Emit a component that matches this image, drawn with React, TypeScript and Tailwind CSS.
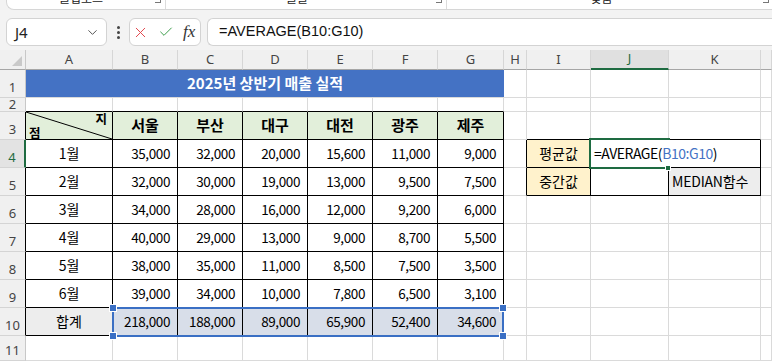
import React from "react";
import { ChevronDown, X, Check } from "lucide-react";

const COLS =
  "grid-cols-[26px_87px_65px_65px_65px_65px_65px_66px_23px_64px_78px_92px_11px]";
const ROWS =
  "grid-rows-[20px_28px_14px_28px_28px_28px_28px_28px_28px_28px_28px_25px]";

const CELL_FONT = { fontFamily: '"Noto Sans CJK KR", "Noto Sans", sans-serif' };
const UI_FONT = { fontFamily: '"Noto Sans", "Liberation Sans", sans-serif' };

const letters = ["A", "B", "C", "D", "E", "F", "G", "H", "I", "J", "K", ""];

const months: [string, number[]][] = [
  ["1월", [35000, 32000, 20000, 15600, 11000, 9000]],
  ["2월", [32000, 30000, 19000, 13000, 9500, 7500]],
  ["3월", [34000, 28000, 16000, 12000, 9200, 6000]],
  ["4월", [40000, 29000, 13000, 9000, 8700, 5500]],
  ["5월", [38000, 35000, 11000, 8500, 7500, 3500]],
  ["6월", [39000, 34000, 10000, 7800, 6500, 3100]],
];
const totals = [218000, 188000, 89000, 65900, 52400, 34600];

const fmt = (n: number) => n.toLocaleString("en-US");

// plain grid cell with gridlines; black edges where the tables are
function Cell({
  r = false,
  b = false,
  className = "",
  children,
}: {
  r?: boolean;
  b?: boolean;
  className?: string;
  children?: React.ReactNode;
}) {
  return (
    <div
      className={`border-r border-b ${r ? "border-r-black" : "border-r-[#dadada]"} ${
        b ? "border-b-black" : "border-b-[#dadada]"
      } ${className}`}
    >
      {children}
    </div>
  );
}

function RowHead({
  n,
  black = false,
  active = false,
  short = false,
}: {
  n: number;
  black?: boolean;
  active?: boolean;
  short?: boolean;
}) {
  return (
    <div
      className={`flex justify-center text-[13px] leading-none border-b border-b-[#d4d4d4] ${
        short ? "items-center" : "items-end pb-[3px]"
      } ${
        active
          ? "bg-[#e3e3e3] text-[#1e6b41] border-r-2 border-r-[#1e6b41]"
          : `bg-[#f0f0f0] text-[#444] border-r ${black ? "border-r-black" : "border-r-[#c8c8c8]"}`
      }`}
      style={UI_FONT}
    >
      {n}
    </div>
  );
}

function Ribbon() {
  return (
    <div className="h-[18px] bg-[#f3f3f3]">
      <div
        className="ml-[6px] h-[10px] bg-white border-b border-l border-[#d6d6d6] rounded-bl-[8px] flex overflow-hidden text-[12px] text-[#222]"
        style={CELL_FONT}
      >
        <div className="w-[159px] relative border-r border-[#dcdcdc] flex justify-center pr-[10px]">
          <span className="-mt-[10px] leading-[16px]">클립보드</span>
          <span className="absolute right-[4px] top-0 w-[6px] h-[3px] border-b border-r border-[#777]" />
        </div>
        <div className="w-[281px] relative border-r border-[#dcdcdc] flex justify-center pr-[18px]">
          <span className="-mt-[10px] leading-[16px]">글꼴</span>
          <span className="absolute right-[4px] top-0 w-[6px] h-[3px] border-b border-r border-[#777]" />
        </div>
        <div className="flex-1 relative flex justify-center pr-[16px]">
          <span className="-mt-[10px] leading-[16px]">맞춤</span>
          <span className="absolute right-[3px] top-0 w-[6px] h-[3px] border-b border-r border-[#777]" />
        </div>
      </div>
    </div>
  );
}

function FormulaBar() {
  return (
    <div className="h-[32px] bg-[#f3f3f3] flex items-start">
      <div className="ml-[6px] w-[101px] h-[28px] bg-white border border-[#d3d3d3] rounded-[6px] flex items-center justify-between pl-[8px] pr-[6px]">
        <span className="text-[15px] text-[#222]" style={UI_FONT}>
          J4
        </span>
        <ChevronDown size={15} strokeWidth={1.6} color="#555" />
      </div>
      <div className="w-[22px] h-[28px] flex flex-col items-center justify-center gap-[2px]">
        <span className="w-[3px] h-[3px] rounded-full bg-[#444]" />
        <span className="w-[3px] h-[3px] rounded-full bg-[#444]" />
        <span className="w-[3px] h-[3px] rounded-full bg-[#444]" />
      </div>
      <div className="w-[72px] h-[28px] bg-white border border-[#d3d3d3] rounded-[6px] flex items-center pl-[2px] gap-[9px]">
        <X size={17} strokeWidth={1.4} color="#e2474d" />
        <Check size={16} strokeWidth={1.5} color="#3d9e4c" />
        <span
          className="italic text-[17px] text-[#333] leading-none -mt-[2px]"
          style={{ fontFamily: '"Liberation Serif", "DejaVu Serif", serif' }}
        >
          fx
        </span>
      </div>
      <div className="ml-[6px] flex-1 h-[28px] bg-white border border-r-0 border-[#d3d3d3] rounded-l-[6px] flex items-center pl-[11px]">
        <span className="text-[14.5px] text-[#111]" style={{ fontFamily: '"Liberation Sans", Arial, sans-serif' }}>
          =AVERAGE(B10:G10)
        </span>
      </div>
    </div>
  );
}

function Sheet() {
  const num = "flex items-center justify-end pr-[7px] text-[13.5px] tracking-[-0.4px] text-black";
  const ctr = "flex items-center justify-center text-[14px] text-black";

  return (
    <div className="relative">
      <div className={`grid ${COLS} ${ROWS}`} style={CELL_FONT}>
        {/* column header */}
        <div className="bg-[#f0f0f0] border-r border-b border-r-[#c8c8c8] border-b-[#a6a6a6] flex items-end justify-end pr-[3px] pb-[3px]">
          <svg width="10" height="10" viewBox="0 0 10 10">
            <polygon points="10,0 10,10 0,10" fill="#c9c9c9" />
          </svg>
        </div>
        {letters.map((l, i) => (
          <div
            key={i}
            className={`flex items-center justify-center text-[13px] border-r border-r-[#d6d6d6] ${
              l === "J"
                ? "bg-[#e0e0e0] text-[#1e6b41] border-b-2 border-b-[#1e6b41]"
                : "bg-[#f0f0f0] text-[#444] border-b border-b-[#a6a6a6]"
            }`}
            style={UI_FONT}
          >
            {l}
          </div>
        ))}

        {/* row 1: title */}
        <RowHead n={1} />
        <div className="col-span-7 bg-[#4472c4] border-b border-b-[#dadada] flex items-center justify-center text-white text-[15px] font-bold">
          2025년 상반기 매출 실적
        </div>
        {[0, 1, 2, 3, 4].map((i) => (
          <Cell key={i} />
        ))}

        {/* row 2 */}
        <RowHead n={2} short />
        {[0, 1, 2, 3, 4, 5, 6].map((i) => (
          <Cell key={i} b />
        ))}
        {[0, 1, 2, 3, 4].map((i) => (
          <Cell key={i} />
        ))}

        {/* row 3: headers */}
        <RowHead n={3} black />
        <Cell r b className="relative bg-[#e2efda] flex flex-col justify-between px-[3px] pb-0 text-[12.5px] font-bold leading-none">
          <svg className="absolute inset-0 w-full h-full" preserveAspectRatio="none" viewBox="0 0 86 27">
            <line x1="0" y1="0" x2="86" y2="27" stroke="black" strokeWidth="1" />
          </svg>
          <span className="self-end mr-[2px] mt-[1px]">지</span>
          <span className="self-start">점</span>
        </Cell>
        {["서울", "부산", "대구", "대전", "광주", "제주"].map((c) => (
          <Cell key={c} r b className={`${ctr} bg-[#e2efda] font-bold text-[15px]`}>
            {c}
          </Cell>
        ))}
        <Cell />
        <Cell b />
        <Cell b />
        <Cell b />
        <Cell />

        {/* rows 4-9 */}
        {months.map(([m, vals], ri) => (
          <React.Fragment key={m}>
            <RowHead n={ri + 4} black active={ri === 0} />
            <Cell r b className={ctr}>
              {m}
            </Cell>
            {vals.map((v, i) => (
              <Cell key={i} r b className={num}>
                {fmt(v)}
              </Cell>
            ))}
            {ri === 0 && (
              <>
                <Cell r />
                <Cell r b className={`${ctr} bg-[#fff2cc]`}>
                  평균값
                </Cell>
                {/* J4 in edit mode: text runs over K4, no divider */}
                <Cell b className="relative flex items-center pl-[3px] text-[14px] tracking-[-0.45px] whitespace-nowrap !border-r-white">
                  <span>
                    =AVERAGE(<span className="text-[#4472c4]">B10:G10</span>)
                  </span>
                  <span className="ml-[2px] w-[1px] h-[17px] bg-black" />
                </Cell>
                <Cell r b />
                <Cell />
              </>
            )}
            {ri === 1 && (
              <>
                <Cell r />
                <Cell r b className={`${ctr} bg-[#fff2cc]`}>
                  중간값
                </Cell>
                <Cell r b />
                <Cell r b className="flex items-center pl-[3px] text-[14px] tracking-[-0.2px] bg-[#ededed]">
                  MEDIAN함수
                </Cell>
                <Cell />
              </>
            )}
            {ri > 1 &&
              [0, 1, 2, 3, 4].map((i) => <Cell key={i} />)}
          </React.Fragment>
        ))}

        {/* row 10: totals */}
        <RowHead n={10} black />
        <Cell r b className={`${ctr} bg-[#ededed]`}>
          합계
        </Cell>
        {totals.map((v, i) => (
          <Cell key={i} r b className={`${num} bg-[#d8dee9]`}>
            {fmt(v)}
          </Cell>
        ))}
        {[0, 1, 2, 3, 4].map((i) => (
          <Cell key={i} />
        ))}

        {/* row 11 */}
        <RowHead n={11} />
        {[0, 1, 2, 3, 4, 5, 6, 7, 8, 9, 10, 11].map((i) => (
          <Cell key={i} />
        ))}
      </div>

      {/* active cell J4 (editing) */}
      <div className="absolute left-[589px] top-[88px] w-[81px] h-[31px] border-2 border-r-0 border-[#1e6b41] pointer-events-none" />
      <div className="absolute left-[665px] top-[115px] w-[6px] h-[6px] bg-[#1e6b41] border border-white" />

      {/* range selection B10:G10 */}
      <div className="absolute left-[112px] top-[257px] w-[392px] h-[30px] border-2 border-[#3a6fc4] pointer-events-none" />
      <div className="absolute left-[109px] top-[254px] w-[8px] h-[8px] bg-[#3a6fc4] border border-white" />
      <div className="absolute left-[109px] top-[282px] w-[8px] h-[8px] bg-[#3a6fc4] border border-white" />
      <div className="absolute left-[499px] top-[254px] w-[8px] h-[8px] bg-[#3a6fc4] border border-white" />
      <div className="absolute left-[499px] top-[282px] w-[8px] h-[8px] bg-[#3a6fc4] border border-white" />
    </div>
  );
}

export default function App() {
  return (
    <div className="w-[772px] h-[361px] overflow-hidden bg-white">
      <Ribbon />
      <FormulaBar />
      <Sheet />
    </div>
  );
}
